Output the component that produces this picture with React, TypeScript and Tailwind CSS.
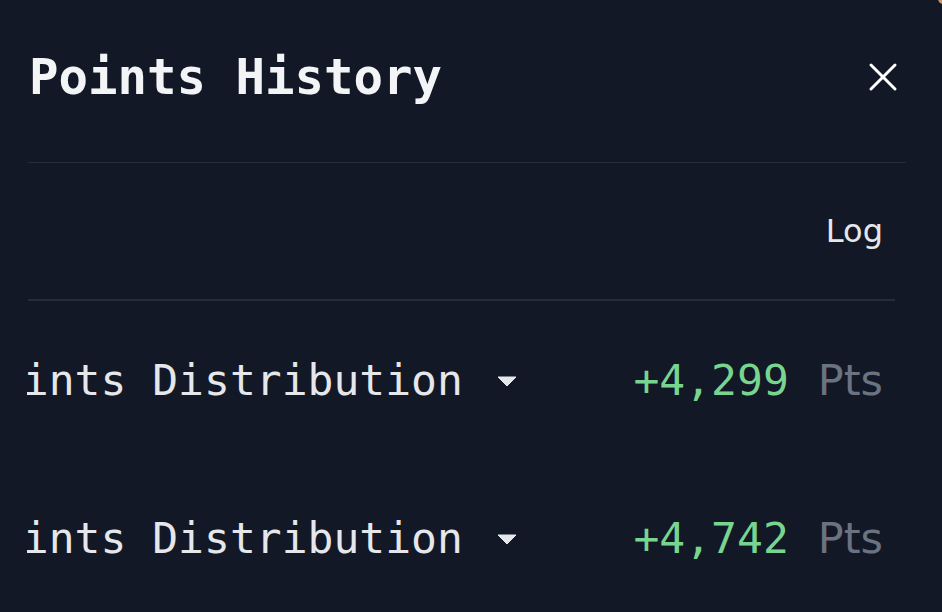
import { X } from "lucide-react";

const rows = [
  { label: "Points Distribution", amount: "+4,299" },
  { label: "Points Distribution", amount: "+4,742" },
];

const mono = { fontFamily: '"DejaVu Sans Mono", monospace' };

export default function App() {
  return (
    <div className="relative w-[942px] h-[612px] overflow-hidden bg-[#131826] text-[#e5e7eb]">
      <div className="absolute top-[-7px] right-[-7px] w-[11px] h-[11px] rounded-full bg-[#c9956a]" />
      <div className="flex items-center justify-between h-[162px] pl-[29px] pr-[35px] pb-[8px]">
        <h2 className="text-[49px] font-bold text-[#f3f4f6] leading-none" style={mono}>
          Points History
        </h2>
        <X className="w-[48px] h-[48px] text-white" strokeWidth={1.5} />
      </div>
      <div className="mx-[28px] mr-[36px] h-px bg-[#262c38]" />

      <div className="ml-[28px] mr-[47px] h-[138px] flex items-center justify-end pr-[12px] border-b-2 border-[#262c38]">
        <span className="text-[32px] text-[#e5e7eb]" style={{ fontFamily: '"DejaVu Sans", sans-serif' }}>
          Log
        </span>
      </div>

      <div className="ml-[27px] overflow-hidden">
        {rows.map((r, i) => (
          <div key={i} className="flex items-center h-[158px] ml-[-56px] mr-[59px]">
            <div className="flex items-center gap-[34px] text-[43px] text-[#e5e7eb]" style={mono}>
              <span>{r.label}</span>
              <svg width="20" height="11" viewBox="0 0 20 11" className="mt-[2px]">
                <path d="M1 1 L19 1 L10 10 Z" fill="#e5e7eb" stroke="#e5e7eb" strokeLinejoin="round" />
              </svg>
            </div>
            <div className="ml-auto flex items-baseline gap-[29px]">
              <span className="text-[43px] text-[#78d590]" style={mono}>
                {r.amount}
              </span>
              <span className="text-[43px] text-[#6b7280] leading-none" style={{ fontFamily: '"DejaVu Sans", sans-serif' }}>
                Pts
              </span>
            </div>
          </div>
        ))}
      </div>
    </div>
  );
}
